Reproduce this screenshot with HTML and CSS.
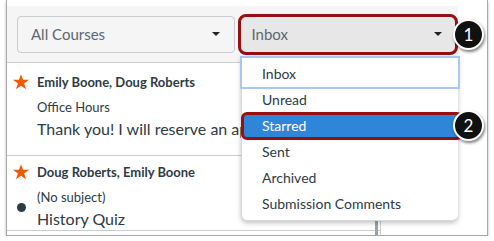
FILE: index.html
```html
<!DOCTYPE html>
<html>
<head>
  <meta charset="UTF-8">
  <title>Inbox Filter</title>
  <link rel="stylesheet" href="styles.css">
</head>
<body>

  <div class="frame">
    <div class="shot">

      <!-- filter bar -->
      <div class="filter-bar">
        <div class="select">
          <span>All Courses</span>
          <span class="caret"></span>
        </div>
        <div class="select select-inbox">
          <span>Inbox</span>
          <span class="caret"></span>
        </div>
      </div>

      <!-- message list -->
      <div class="content">
        <div class="list">
          <div class="msg msg-first">
            <div class="msg-icons">
              <svg class="star" width="18" height="18" viewBox="0 0 24 24"><path d="M12 1.5l2.7 7.6h8l-6.5 4.8 2.5 7.8L12 16.9l-6.7 4.8 2.5-7.8L1.3 9.1h8z" fill="#f05a00"/></svg>
            </div>
            <div class="msg-body">
              <div class="msg-name">Emily Boone, Doug Roberts</div>
              <div class="msg-subject">Office Hours</div>
              <div class="msg-preview">Thank you! I will reserve an appointment for Friday.</div>
            </div>
          </div>
          <div class="msg">
            <div class="msg-icons">
              <svg class="star" width="18" height="18" viewBox="0 0 24 24"><path d="M12 1.5l2.7 7.6h8l-6.5 4.8 2.5 7.8L12 16.9l-6.7 4.8 2.5-7.8L1.3 9.1h8z" fill="#f05a00"/></svg>
              <span class="unread-dot"></span>
            </div>
            <div class="msg-body">
              <div class="msg-name">Doug Roberts, Emily Boone</div>
              <div class="msg-subject">(No subject)</div>
              <div class="msg-preview">History Quiz</div>
            </div>
          </div>
          <span class="scroll-thumb"></span>
        </div>
      </div>

      <!-- open menu -->
      <ul class="menu">
        <li class="menu-focus">Inbox</li>
        <li>Unread</li>
        <li class="menu-active">Starred</li>
        <li>Sent</li>
        <li>Archived</li>
        <li>Submission Comments</li>
      </ul>

    </div>

    <span class="badge badge-one">1</span>
    <span class="badge badge-two">2</span>
  </div>

</body>
</html>
```

FILE: styles.css
```css
body {
  margin: 0;
  padding: 0;
  background-color: #FFFFFF;
  font-family: Lato, "Open Sans", sans-serif;
  color: #2d3b45;
}
/* outer screenshot frame */
.frame {
  position: relative;
  margin-left: 6px;
  width: 482px;
  height: 236px;
  padding-top: 6px;
  box-sizing: border-box;
  border: 1px solid #a8a8a8;
  border-top: none;
  box-shadow: 0 2px 3px rgba(0, 0, 0, 0.25);
  background-color: #FFFFFF;
}
.shot {
  position: relative;
  width: 451px;
  height: 229px;
}
/* filter bar */
.filter-bar {
  display: flex;
  align-items: center;
  gap: 3px;
  height: 57px;
  padding-left: 10px;
  box-sizing: border-box;
  background-color: #f5f5f5;
  border-bottom: 1px solid #c7cdd1;
}
.select {
  display: flex;
  align-items: center;
  justify-content: space-between;
  width: 219px;
  height: 37px;
  padding: 0 14px 0 13px;
  box-sizing: border-box;
  border: 1px solid #c7cdd1;
  border-radius: 4px;
  background-color: #f5f5f5;
  color: #5b6770;
  font-size: 15px;
}
.select-inbox {
  width: 222px;
  height: 41px;
  padding: 0 13px 0 11px;
  border: 3px solid #970f0f;
  border-radius: 8px;
  background-color: #e7e7e7;
}
.caret {
  width: 0;
  height: 0;
  border-left: 4px solid transparent;
  border-right: 4px solid transparent;
  border-top: 4px solid #222;
}
/* message list */
.content {
  display: flex;
}
.list {
  position: relative;
  width: 373px;
  height: 172px;
  border-right: 1px solid #c7cdd1;
  overflow: hidden;
}
.msg {
  display: flex;
  padding: 6px 0 0 5px;
  border-bottom: 1px solid #c7cdd1;
}
.msg-first {
  padding-top: 9px;
  padding-bottom: 15px;
}
.msg-icons {
  display: flex;
  flex-direction: column;
  align-items: center;
  width: 18px;
  margin-right: 7px;
}
.star {
  margin-top: 1px;
}
.unread-dot {
  width: 9px;
  height: 9px;
  margin-top: 22px;
  border-radius: 50%;
  background-color: #2d3b45;
}
.msg-body {
  white-space: nowrap;
}
.msg-name {
  font-size: 13px;
  font-weight: bold;
  line-height: 20px;
}
.msg-subject {
  font-size: 13px;
  line-height: 20px;
  margin-top: 5px;
}
.msg-preview {
  font-size: 16px;
  line-height: 22px;
  margin-top: 1px;
}
.scroll-thumb {
  position: absolute;
  right: 2px;
  bottom: 0;
  width: 3px;
  height: 14px;
  background-color: #9aa3aa;
}
/* dropdown menu */
.menu {
  position: absolute;
  left: 234px;
  top: 50px;
  width: 217px;
  margin: 0;
  padding: 5px 0 3px 0;
  box-sizing: border-box;
  list-style: none;
  background-color: #FFFFFF;
  border: 1px solid #d5d9dc;
  border-right: none;
  border-radius: 0 0 6px 6px;
  box-shadow: 0 2px 5px rgba(0, 0, 0, 0.25);
  font-size: 14px;
}
.menu li {
  height: 26px;
  line-height: 26px;
  padding-left: 20px;
  color: #2d3b45;
}
.menu-focus {
  box-shadow: 0 0 0 2px #a7c8f2;
  margin-top: -4px;
  padding-top: 3px;
}
.menu-active {
  position: relative;
  margin-right: -5px;
  margin-left: -1px;
  padding-left: 18px !important;
  border: 3px solid #970f0f;
  border-radius: 6px;
  background-color: #2f86d8;
  color: #FFFFFF !important;
  height: 22px !important;
  line-height: 22px !important;
  margin-top: -1px;
  margin-bottom: -1px;
}
/* annotation badges */
.badge {
  position: absolute;
  width: 27px;
  height: 27px;
  border: 2px solid #FFFFFF;
  border-radius: 50%;
  background-color: #111;
  box-shadow: 1px 2px 3px rgba(0, 0, 0, 0.5);
  color: #FFFFFF;
  font-size: 17px;
  line-height: 27px;
  text-align: center;
}
.badge-one {
  left: 446px;
  top: 19px;
}
.badge-two {
  left: 446px;
  top: 110px;
}
```
